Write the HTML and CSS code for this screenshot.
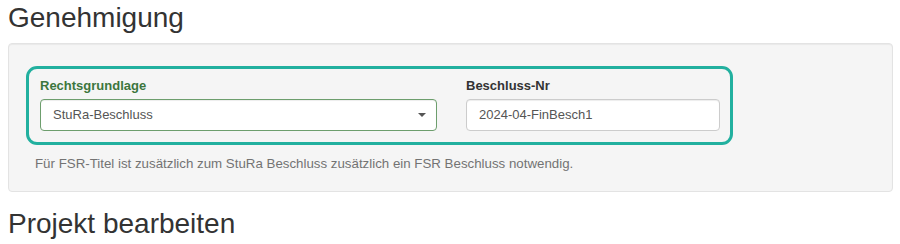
FILE: index.html
```html
<!DOCTYPE html>
<html lang="de">

<head>
    <meta charset="UTF-8">
    <meta name="viewport" content="width=device-width, initial-scale=1.0">
    <title>Genehmigung</title>
    <link rel="stylesheet" href="styles.css">
</head>

<body>
    <div class="page">
        <!-- Genehmigung -->
        <h3 class="page-title">Genehmigung</h3>
        <div class="well">
            <div class="highlight">
                <div class="field field-wide has-success">
                    <label class="field-label">Rechtsgrundlage</label>
                    <div class="select-box">
                        <span>StuRa-Beschluss</span>
                        <span class="caret"></span>
                    </div>
                </div>
                <div class="field field-narrow">
                    <label class="field-label" for="beschluss">Beschluss-Nr</label>
                    <input type="text" id="beschluss" class="text-box" value="2024-04-FinBesch1">
                </div>
            </div>
            <p class="help-text">Für FSR-Titel ist zusätzlich zum StuRa Beschluss zusätzlich ein FSR Beschluss notwendig.</p>
        </div>

        <!-- Projekt -->
        <h3 class="page-title page-title-next">Projekt bearbeiten</h3>
    </div>
</body>

</html>
```

FILE: styles.css
```css
/* Grundlayout */
body {
    margin: 0;
    font-family: "Liberation Sans", Arial, sans-serif;
    font-size: 13px;
    color: #333;
    background: #fff;
}

.page {
    padding: 0 7px 0 8px;
}

.page-title {
    margin: 3px 0 9px;
    font-size: 28px;
    font-weight: normal;
    line-height: 1.1;
    color: #333;
}

.page-title-next {
    margin-top: 17px;
}

/* Well */
.well {
    background: #f5f5f5;
    border: 1px solid #e3e3e3;
    border-radius: 4px;
    box-shadow: inset 0 1px 1px rgba(0,0,0,0.05);
    padding: 22px 17px 18px;
}

.highlight {
    box-sizing: border-box;
    display: flex;
    gap: 29px;
    width: 707px;
    padding: 8px 10px 11px 11px;
    border: 3px solid #22b09f;
    border-radius: 11px;
}

.field-wide {
    width: 397px;
}

.field-narrow {
    width: 254px;
}

.field-label {
    display: block;
    margin-bottom: 4px;
    font-weight: bold;
    line-height: 18px;
}

.has-success .field-label {
    color: #3c763d;
}

.select-box,
.text-box {
    box-sizing: border-box;
    width: 100%;
    height: 32px;
    padding: 0 12px;
    background: #fff;
    border: 1px solid #ccc;
    border-radius: 4px;
    box-shadow: inset 0 1px 1px rgba(0,0,0,0.075);
    font-family: inherit;
    font-size: 13px;
    color: #555;
}

.select-box {
    display: flex;
    align-items: center;
    justify-content: space-between;
    border-color: #6d9e6d;
    padding-right: 10px;
}

.caret {
    width: 0;
    height: 0;
    border-left: 4px solid transparent;
    border-right: 4px solid transparent;
    border-top: 4px solid #555;
}

.text-box {
    display: block;
}

.help-text {
    margin: 10px 0 0 9px;
    font-size: 13.3px;
    line-height: 18px;
    color: #737373;
}
```
